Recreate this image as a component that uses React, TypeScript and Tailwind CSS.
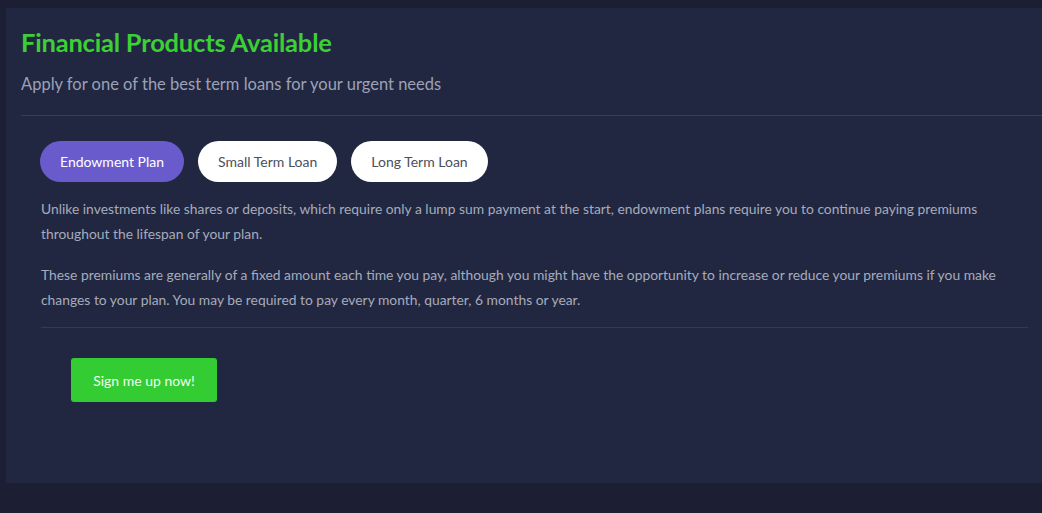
import React, { useState } from "react";

const tabs = ["Endowment Plan", "Small Term Loan", "Long Term Loan"];

export default function App() {
  const [active, setActive] = useState(0);
  return (
    <div
      className="w-[1042px] h-[513px] overflow-hidden bg-[#1c1f33] pt-[8px] pl-[6px]"
      style={{ fontFamily: "Lato, 'Open Sans', sans-serif" }}
    >
      <div className="w-[1057px] h-[475px] bg-[#212740] pt-[19px] pl-[15px] pr-[15px]">
        <h1 className="text-[25.5px] leading-[30px] font-bold text-[#3ccf36] tracking-[-0.2px]">
          Financial Products Available
        </h1>
        <p className="mt-[15px] text-[16.5px] leading-[24px] text-[#9ca1b7]">
          Apply for one of the best term loans for your urgent needs
        </p>
        <div className="mt-[19px] h-px bg-[#353d58]" />
        <div className="px-[20px] pt-[25px]">
          <div className="flex gap-[14px] -ml-px">
            {tabs.map((t, i) => (
              <button
                key={t}
                onClick={() => setActive(i)}
                className={
                  i === active
                    ? "h-[41px] px-[20px] rounded-full bg-[#6a5bcc] text-white text-[14px]"
                    : "h-[41px] px-[20px] rounded-full bg-white text-[#4b4f5c] text-[14px]"
                }
              >
                {t}
              </button>
            ))}
          </div>
          <div className="mt-[14px] text-[13.85px] leading-[25px] text-[#a6abbd]">
            <p>
              Unlike investments like shares or deposits, which require only a lump sum payment at the start, endowment plans require you to continue paying premiums throughout the lifespan of your plan.
            </p>
            <p className="mt-[16px]">
              These premiums are generally of a fixed amount each time you pay, although you might have the opportunity to increase or reduce your premiums if you make changes to your plan. You may be required to pay every month, quarter, 6 months or year.
            </p>
          </div>
          <div className="mt-[15px] h-px bg-[#323a54]" />
          <div className="pl-[30px] pt-[30px]">
            <button className="w-[146px] h-[44px] rounded-[3px] bg-[#33cc33] text-[#f0fff0] text-[14px]">
              Sign me up now!
            </button>
          </div>
        </div>
      </div>
    </div>
  );
}
